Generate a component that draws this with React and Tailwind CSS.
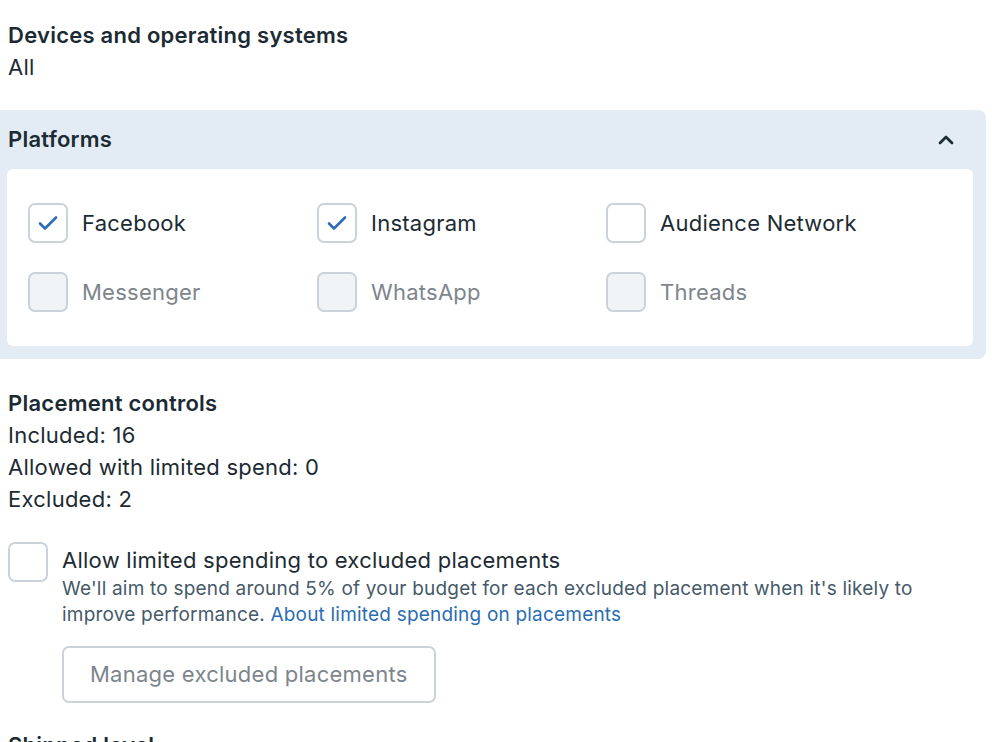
import React, { useState } from 'react';

const platforms = [
  { name: 'Facebook', checked: true, disabled: false },
  { name: 'Instagram', checked: true, disabled: false },
  { name: 'Audience Network', checked: false, disabled: false },
  { name: 'Messenger', checked: false, disabled: true },
  { name: 'WhatsApp', checked: false, disabled: true },
  { name: 'Threads', checked: false, disabled: true },
];

const CheckBox = ({ checked, disabled }) => (
  <div
    className={`w-10 h-10 shrink-0 rounded-[7px] border-2 border-[#cbd2d9] flex items-center justify-center ${
      disabled ? 'bg-[#f1f4f7]' : 'bg-white'
    }`}
  >
    {checked && (
      <svg width="24" height="24" viewBox="0 0 24 24" fill="none">
        <path d="M4 12.5l5 5L20 6.5" stroke="#2d6db5" strokeWidth="2.6" strokeLinecap="round" strokeLinejoin="round" />
      </svg>
    )}
  </div>
);

const App = () => {
  const [open] = useState(true);

  return (
    <div className="w-[992px] h-[742px] overflow-hidden bg-white text-[#1c2b33] font-['Inter',sans-serif] tracking-[0.25px]">
      {/* Devices */}
      <div className="px-2 pt-[19px]">
        <h2 className="text-[22px] leading-8 font-semibold">Devices and operating systems</h2>
        <p className="text-[22px] leading-8">All</p>
      </div>

      {/* Platforms */}
      <div className="mt-[27px] mr-[6px] bg-[#e3ecf5] rounded-r-lg pb-[13px]">
        <div className="flex items-center justify-between pl-2 pr-[30px] h-[59px]">
          <h2 className="text-[22px] font-semibold">Platforms</h2>
          <svg width="20" height="20" viewBox="0 0 20 20" fill="none">
            <path d="M4 13l6-6 6 6" stroke="#1c2b33" strokeWidth="2.8" strokeLinecap="round" strokeLinejoin="round" />
          </svg>
        </div>
        {open && (
          <div className="ml-[7px] mr-[13px] bg-white rounded-md pl-[21px] pt-[34px] pb-[34px] grid grid-cols-[289px_289px_1fr] gap-y-[29px]">
            {platforms.map((p) => (
              <label key={p.name} className="flex items-center gap-[14px]">
                <CheckBox checked={p.checked} disabled={p.disabled} />
                <span className={`text-[22px] ${p.disabled ? 'text-[#7d858c]' : 'text-[#1c2b33]'}`}>{p.name}</span>
              </label>
            ))}
          </div>
        )}
      </div>

      {/* Placement controls */}
      <div className="px-2 pt-[28px]">
        <h2 className="text-[22px] leading-8 font-semibold">Placement controls</h2>
        <p className="text-[22px] leading-8">Included: 16</p>
        <p className="text-[22px] leading-8">Allowed with limited spend: 0</p>
        <p className="text-[22px] leading-8">Excluded: 2</p>

        <div className="flex gap-[14px] mt-[27px]">
          <CheckBox checked={false} disabled={false} />
          <div className="pr-[60px]">
            <p className="text-[22px] leading-8 mt-[2px]">Allow limited spending to excluded placements</p>
            <p className="text-[19px] leading-[26px] tracking-[0.2px] text-[#465a69]">
              We'll aim to spend around 5% of your budget for each excluded placement when it's likely to improve
              performance.{' '}
              <a className="text-[#2a6db3]">About limited spending on placements</a>
            </p>
            <button className="mt-[18px] h-[57px] px-[26px] border-2 border-[#cbd2d9] rounded-[7px] text-[22px] text-[#7d858c]">
              Manage excluded placements
            </button>
          </div>
        </div>

        <h2 className="mt-[26px] text-[22px] leading-8 font-semibold">Shipped level</h2>
      </div>
    </div>
  );
};

export default App;
